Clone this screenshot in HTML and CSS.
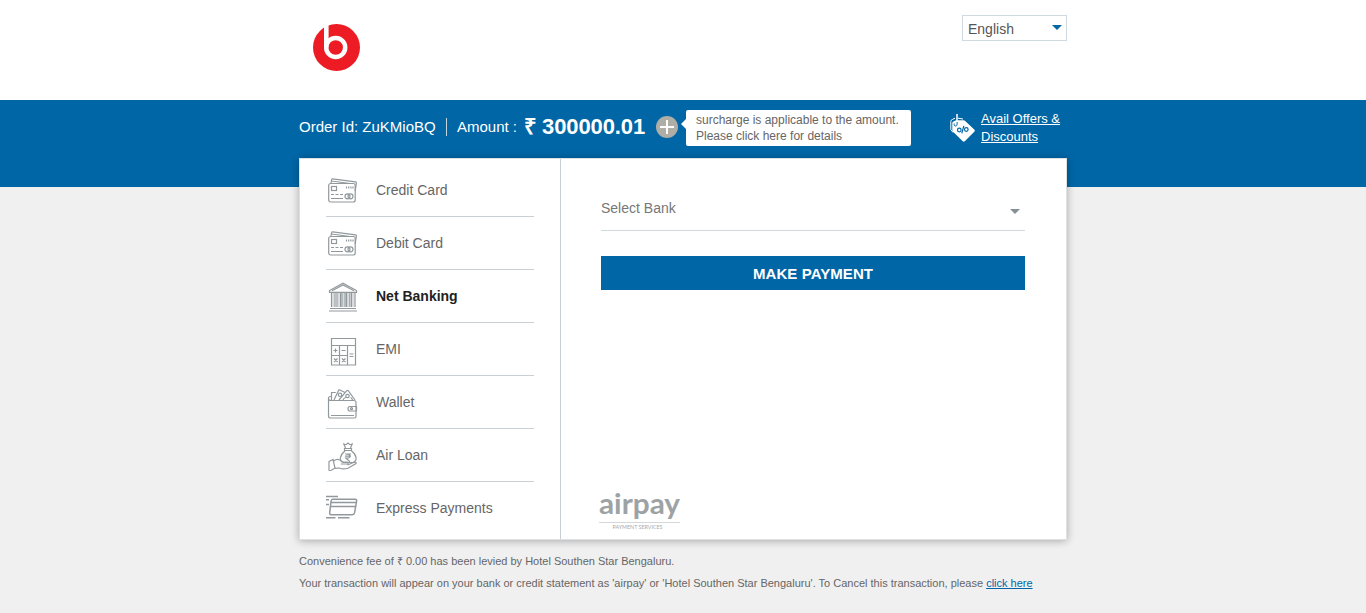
FILE: index.html
```html
<!DOCTYPE html>
<html lang="en">
<head>
<meta charset="utf-8">
<title>Payment</title>
<link rel="stylesheet" href="styles.css">
</head>
<body>
<svg class="defs" aria-hidden="true">
  <symbol id="cards" viewBox="0 0 32 32">
    <path d="M5 8 5.700 4.500q.2-.8 1-.7L29.500 6.800q1 .2.900 1.200L29.200 16M5.500 6 24 8.500" />
    <rect x="2.700" y="8.500" width="26.500" height="18.500" rx="2" />
    <rect x="5.500" y="11.500" width="5" height="4" />
    <path d="M20.500 11.500v2M22.700 11.500v2M24.900 11.500v2M27 11.500v2M5 19.500h3M9.500 19.500h3M14 19.500h3M5 23.500h12" />
    <circle cx="21.500" cy="21.300" r="2.500" /><circle cx="24.500" cy="21.300" r="2.500" />
  </symbol>
</svg>
<header class="top">
  <div class="wrap top-row">
    <svg class="brand" width="48" height="48" viewBox="0 0 48 48">
      <circle cx="24.500" cy="24.500" r="23.500" fill="#ed1c24" />
      <circle cx="23.700" cy="24.500" r="9.500" fill="none" stroke="#fff" stroke-width="4.500" />
      <path d="M14.300 1v23.500" stroke="#fff" stroke-width="4.600" fill="none" />
    </svg>
    <div class="language"><span>English</span><i class="caret"></i></div>
  </div>
</header>
<section class="band">
  <div class="wrap band-row">
    <span class="order">Order Id: ZuKMioBQ</span>
    <span class="amount-label">Amount :</span>
    <strong class="amount"><span class="rupee">₹</span>300000.01</strong>
    <svg class="plus" width="22" height="22" viewBox="0 0 22 22"><circle cx="11" cy="11" r="11" fill="#aeaea6" /><path d="M11 4v14M4 11h14" stroke="#fff" stroke-width="2" /></svg>
    <div class="tip">surcharge is applicable to the amount.<br>Please click here for details</div>
    <svg class="tag" width="26" height="30" viewBox="0 0 26 30">
      <path d="M3 18.500.8 15.500.8 7.500q0-1.500 1.500-2L5 4.200M8 4.200l5 .8" fill="none" stroke="#fff" />
      <path d="M2.300 9q0-1.200 1.200-1.600L6 6.200l7.500.1q1 0 1.700.7l9.300 8.800q.8.900 0 1.800l-9.700 9.600q-1.200 1-2.300-.2L2.800 17.500q-.5-.7-.5-1.500z" fill="#fff" />
      <path d="M4.200 9.500v1q0 1.500 1.400 1.500t1.500-1.600V8" stroke="#0066a6" fill="none" />
      <path d="M7 0v7.500" stroke="#fff" stroke-width="1.500" fill="none" />
      <g fill="none" stroke="#0066a6" stroke-width="1.200"><circle cx="9.300" cy="16" r="1.800" /><circle cx="16.300" cy="15.500" r="1.800" /><path d="M13.800 11.800l-2 7.500" /></g>
    </svg>
    <a class="offers">Avail Offers &amp;<br>Discounts</a>
  </div>
</section>
<main class="wrap card">
  <nav class="methods">
    <div class="method"><svg class="icon" viewBox="0 0 32 32"><use href="#cards" /></svg><span>Credit Card</span></div>
    <div class="method"><svg class="icon" viewBox="0 0 32 32"><use href="#cards" /></svg><span>Debit Card</span></div>
    <div class="method active"><svg class="icon" viewBox="0 0 32 32">
      <path d="M3.500 11.300V9.500L17 2.300l13.500 7.200v1.800zM6 9.800 17 4l11 5.800" />
      <path class="pale" d="M7.300 12v14M12.700 12v14M17.500 12v14M22 12v14M27.200 12v14" />
      <path d="M5.500 12v14M9 12v14M11 12v14M14.500 12v14M16 12v14M19 12v14M20.500 12v14M23.800 12v14M25.500 12v14M29 12v14M4 27.500h26M3 30h28" /></svg><span>Net Banking</span></div>
    <div class="method"><svg class="icon low" viewBox="0 0 32 32">
      <path d="M5.500 3.500h24v26.500h-24zM5.500 10.500h24M13.500 10.500v19.500M21.500 10.500v19.500M5.500 20.500h16M7.500 15.500h4M9.500 13.500v4M15.500 15.500h4M23.500 19h4M23.500 21.500h4M8 23.500l3.500 3.500M11.500 23.500 8 27M16 23.500l3.500 3.500M19.500 23.500 16 27" /></svg><span>EMI</span></div>
    <div class="method"><svg class="icon low" viewBox="0 0 32 32">
      <path d="M5.500 12V4.500h4.300M8 12l4.500-9.500q.5-1 1.500-.5l5 2.500M13 12l7.800-9.300q.7-.7 1.400 0L29 12M17 12q1-2.500 3-2.500M24.500 9.500q1.500.5 2 2.500" /><circle cx="14" cy="6.800" r="1.700" /><circle cx="21.500" cy="8" r="1.700" />
      <path d="M5 12.500h23q2 0 2 2v14q0 1.500-1.500 1.500H4.500q-2 0-2-2V10q0-1.500 2.500-1.500M2.500 11q.5 1.500 2.500 1.500M5 27.500h23M30.500 18.500H24q-2 0-2 2.300t2 2.200h6.500z" /><circle cx="25.500" cy="20.700" r="1" /></svg><span>Wallet</span></div>
    <div class="method"><svg class="icon low" viewBox="0 0 32 32">
      <path d="M19.500 7 17.800 3l2.200.7L22 2l2 1.700 2.200-.7-1.700 4M18.500 7.500h7v2h-7zM19 10C13.500 14 13 20 17 21.500h10c5-2 3.500-8-1.500-11.500M19 13h6M19 15.200h6M20 13q4 0 4 2.200t-4 2l4 3.500" />
      <path d="M3 20.500l4-2 2 8.500-4 2.500-2-.2zM7.500 20q5-3.500 9 1h4.500q1.800.5.800 2h-7M21.500 24l6.500-2.700q2.800-.5 2 1.200L22 27.200q-5 1.500-9-.2l-4 .3" /></svg><span>Air Loan</span></div>
    <div class="method"><svg class="icon" viewBox="0 0 32 32">
      <path class="thick" d="M6.500 6.300h22.500q2 0 1.600 2l-2 11.400q-.4 2-2.300 2H5.200q-1.800 0-1.500-2L5 8.300q.4-2 1.500-2zM5 9.500h25.500M4.500 13.500h25.200M0 3.400h12M0 6.800h3M0 11.400h3M0 24.800h9.500M12 24.800h11.500" /></svg><span>Express Payments</span></div>
  </nav>
  <div class="pay">
    <div class="bank"><span>Select Bank</span><i class="caret"></i></div>
    <button class="submit">MAKE PAYMENT</button>
    <svg class="airpay" width="82" height="52" viewBox="0 -11 82 52">
      <text class="logo" x="0" y="22" textLength="81" lengthAdjust="spacingAndGlyphs">airpay</text>
      <path d="M0 30.500h81" stroke="#d5d8da" />
      <text class="sub" x="13.500" y="37" textLength="50" lengthAdjust="spacingAndGlyphs">PAYMENT SERVICES</text>
    </svg>
  </div>
</main>
<footer class="wrap notes">
  <p class="fee">Convenience fee of ₹ 0.00 has been levied by Hotel Southen Star Bengaluru.</p>
  <p class="statement">Your transaction will appear on your bank or credit statement as 'airpay' or 'Hotel Southen Star Bengaluru'. To Cancel this transaction, please <a>click here</a></p>
</footer>
</body>
</html>
```
FILE: styles.css
```css
* { box-sizing: border-box; }
body { margin: 0; min-height: 613px; background: #f0f0f0; color: #666; font: 14px/18px "Liberation Sans", Arial, sans-serif; overflow: hidden; }
.defs { display: none; }
.wrap { width: 768px; margin: 0 auto; }
.top { height: 100px; background: #fff; }
.top-row { display: flex; justify-content: space-between; align-items: flex-start; padding-top: 15px; }
.brand { margin: 8px 0 0 13px; }
.language { display: flex; justify-content: space-between; width: 105px; height: 26px; padding: 4px 4px 0 5px; border: 1px solid #cfdae0; color: #555; line-height: 19px; }
.caret { width: 0; height: 0; border: 5px solid transparent; border-bottom: 0; border-top-color: #0066a6; margin-top: 5px; }
.band { height: 87px; background: #0066a6; color: #fff; }
.band-row { display: flex; align-items: center; height: 54px; white-space: nowrap; }
.order { width: 148px; height: 18px; border-right: 1px solid #c5d5df; font-size: 15px; }
.amount-label { width: 67px; margin-left: 10px; font-size: 15px; }
.amount { display: flex; width: 132px; font-size: 22px; line-height: 26px; letter-spacing: -.1px; }
.rupee { width: 18px; }
.plus { flex: none; }
.tip { position: relative; width: 225px; height: 36px; margin: 2px 0 0 8px; padding: 2px 10px; border-radius: 2px; background: #fff; color: #666; font-size: 12px; line-height: 16px; }
.tip::before { content: ""; position: absolute; left: -5px; top: 9px; border: 5px solid transparent; border-left: 0; border-right-color: #fff; }
.tag { flex: none; margin: 3px 0 0 39px; }
.offers { margin: 2px 0 0 5px; font-size: 13px; text-decoration: underline; }
.card { display: flex; height: 382px; margin-top: -29px; border: 1px solid #dde1e3; background: #fff; box-shadow: 0 1px 8px rgba(0,0,0,.3); }
.methods { width: 261px; padding: 5px 26px 0; border-right: 1px solid #c8d0d5; }
.method { display: flex; align-items: center; gap: 18px; height: 53px; border-bottom: 1px solid #c8d0d5; }
.method:last-child { height: 52px; border-bottom: 0; }
.active { color: #222; font-weight: bold; }
.icon { flex: none; width: 32px; height: 32px; margin-top: 1px; fill: none; stroke: #92999d; stroke-width: 1.200; }
.low { margin-top: 4px; }
.pale { stroke: #d9dddf; stroke-width: 2; }
.thick { stroke-width: 1.500; }
.pay { display: flex; flex-direction: column; align-items: flex-start; flex: 1; padding: 40px 41px 0 40px; }
.bank { display: flex; justify-content: space-between; width: 424px; height: 32px; padding-right: 5px; border-bottom: 1px solid #cfdae0; color: #777; }
.bank .caret { margin-top: 10px; border-top-color: #849096; }
.submit { width: 424px; height: 34px; margin-top: 25px; padding: 1px 0 0; border: 0; background: #0066a6; color: #fff; font: bold 15px/33px "Liberation Sans", Arial, sans-serif; letter-spacing: .08px; }
.airpay { margin: 191px 0 0 -2px; }
.logo { fill: #9da2a5; font: bold 28px Lato, sans-serif; }
.sub { fill: #a6aaad; font: 5px Lato, sans-serif; }
.notes { padding-top: 10px; font-size: 11px; line-height: 22px; white-space: nowrap; }
.notes p { margin: 0; }
.notes a { color: #0066a6; text-decoration: underline; }
```
